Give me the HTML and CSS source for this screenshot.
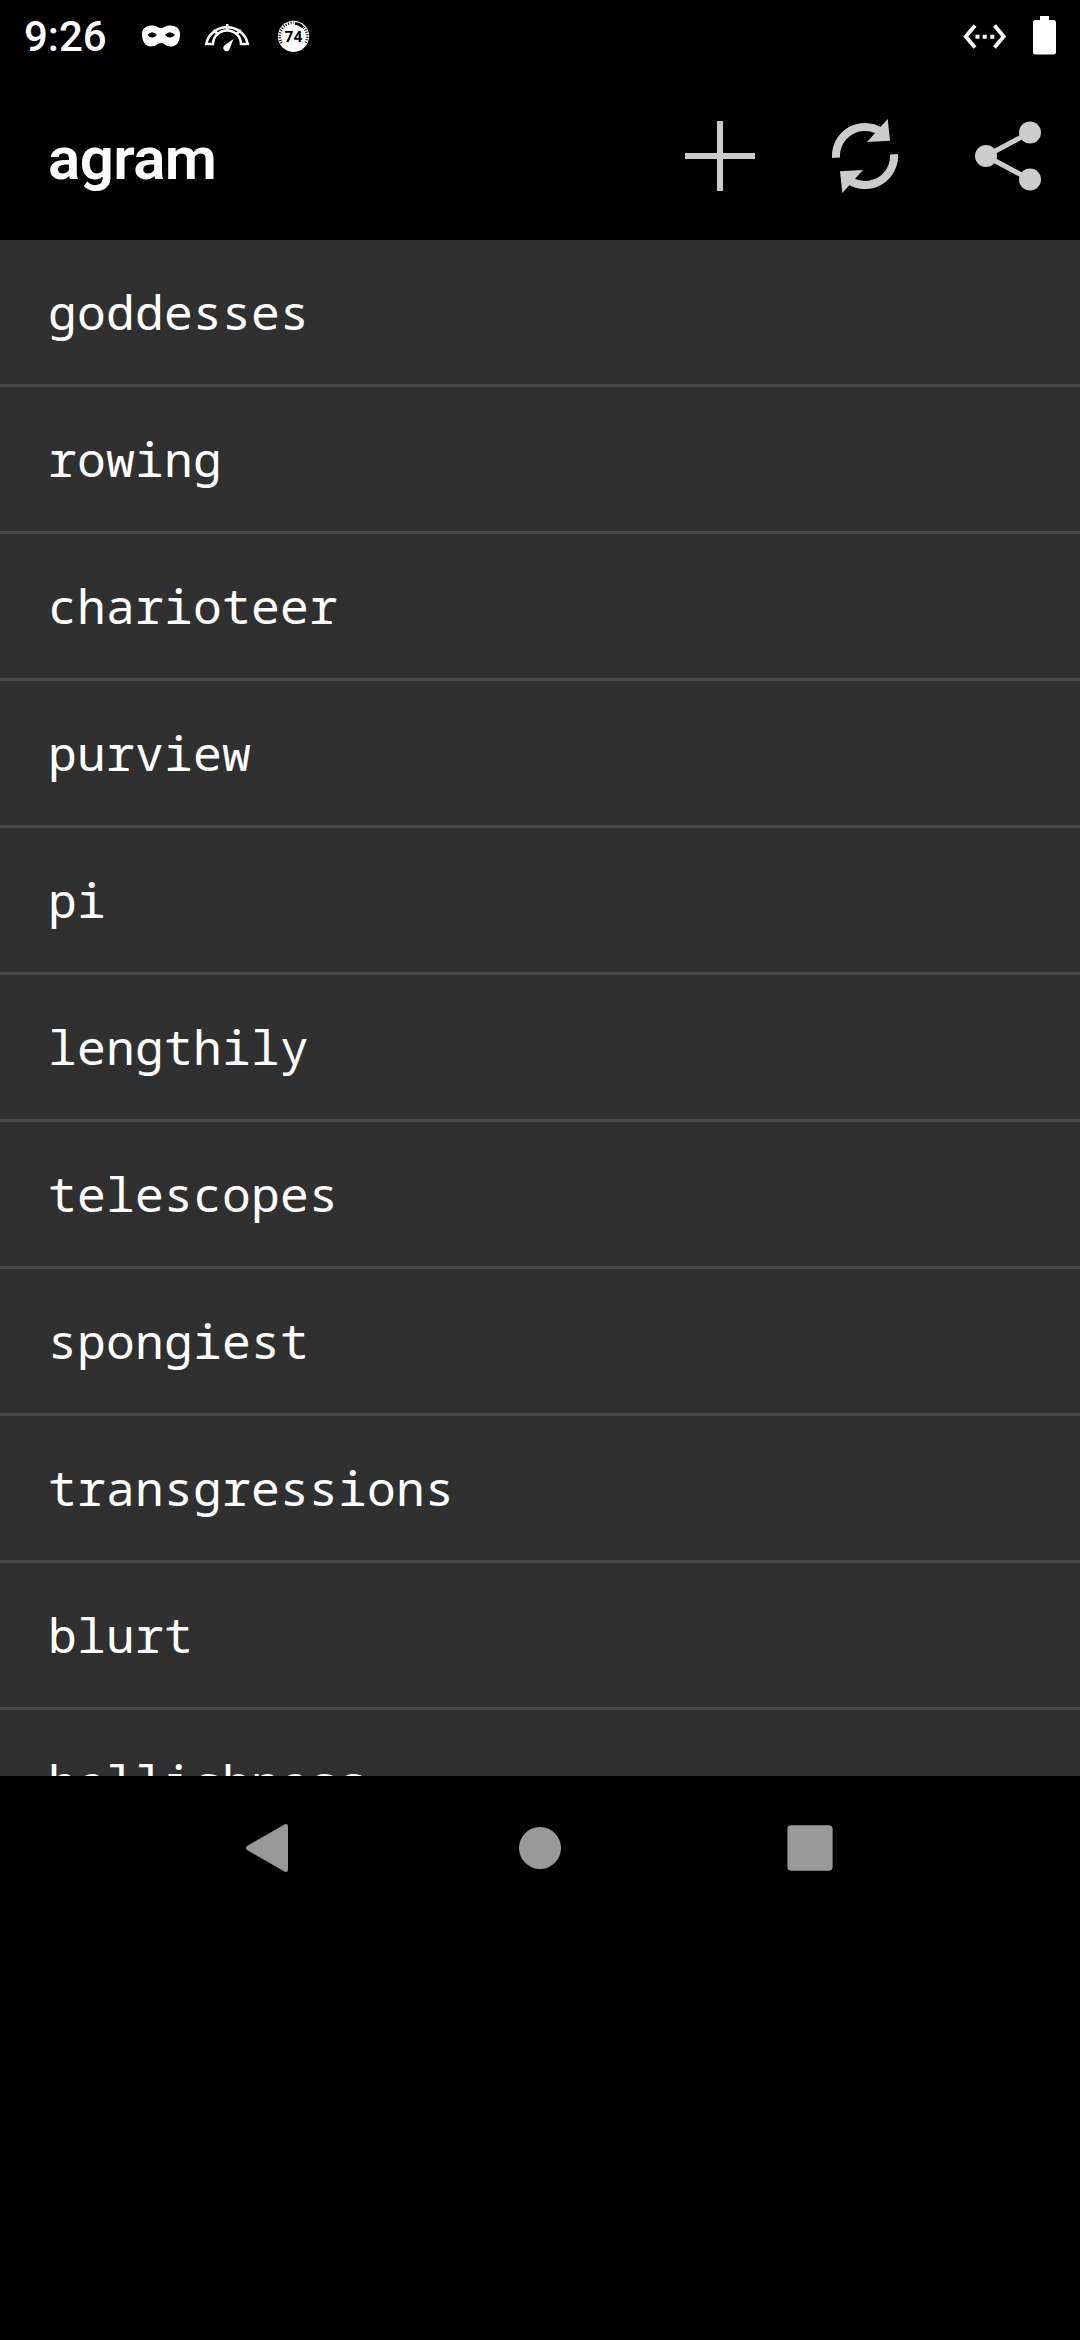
FILE: index.html
```html
<!DOCTYPE html>
<html lang="en">
<head>
<meta charset="utf-8">
<title>agram</title>
<link rel="stylesheet" href="styles.css">
</head>
<body>
<header class="status">
  <span class="clock">9:26</span>
  <svg class="notices" viewBox="135 0 185 72" width="185" height="72">
    <path fill="#fff" fill-rule="evenodd" d="M152 25.500C156 25 158 28 161 28S166 25 170 25.500C177 26 180 29 180 34C180 41 177 46.500 171 46.500C166 46.500 164 43 161 43S156 46.500 151 46.500C145 46.500 142 41 142 34C142 29 145 26 152 25.500ZM147.500 35Q152 29.500 157 35Q152 40 147.500 35ZM165 35Q170 29.500 175 35Q170 40 165 35Z"/>
    <g fill="none" stroke="#fff" stroke-width="2.500">
      <path d="M206.300 44A21 20 0 0 1 247.700 44H241A14 13.500 0 0 0 213 44Z"/>
      <path d="M213.500 30L218.500 35M227.300 24V31M240.800 30L235.500 35"/>
    </g>
    <path fill="#fff" d="M233.500 39L229.800 48.500A3.300 3.300 0 1 1 224.300 45.500Z"/>
    <circle cx="293.500" cy="36.300" r="15.600" fill="#fff"/>
    <path d="M281.600 43A13.600 13.600 0 0 1 293.500 22.700" fill="none" stroke="#000" stroke-width="2.600" stroke-dasharray="1 1.500"/>
    <path d="M303.800 27.500A13.600 13.600 0 0 1 305.400 43" fill="none" stroke="#000" stroke-width="2.600" stroke-dasharray="1 1.500"/>
    <path d="M295 23.400A13 13 0 0 1 303 27.300" fill="none" stroke="#000" stroke-width="2.600"/>
    <text x="293.500" y="41.600" text-anchor="middle" class="level">74</text>
  </svg>
  <svg class="system" viewBox="960 0 100 72" width="100" height="72">
    <path d="M975 25.500L965.800 36.500L975 47.500M994.500 25.500L1003.700 36.500L994.500 47.500" fill="none" stroke="#fff" stroke-width="3.800"/>
    <path d="M975.500 34.700h4v4h-4zM982.700 34.700h4v4h-4zM990.300 34.700h4v4h-4z" fill="#fff"/>
    <path d="M1040 16h9v4h4.500q2.500 0 2.500 2.500v29.500q0 2.500-2.500 2.500h-18q-2.500 0-2.500-2.500v-29.500q0-2.500 2.500-2.500h4.500z" fill="#fff"/>
  </svg>
</header>
<div class="toolbar">
  <h1>agram</h1>
  <nav class="actions">
    <svg viewBox="648 84 144 144"><path fill="#ccc" d="M717 121h6v32h32v6h-32v32h-6v-32h-32v-6h32z"/></svg>
    <svg viewBox="792 84 144 144">
      <g id="half"><path fill="none" stroke="#ccc" stroke-width="8" d="M836 157.800A29 29 0 0 1 880.500 131.500"/><path fill="#ccc" d="M887.700 119L890 140.700L867 142Z"/></g>
      <use href="#half" transform="rotate(180 865 156)"/>
    </svg>
    <svg viewBox="936 84 144 144">
      <path d="M1030 132.500L986 156L1030 179.500" fill="none" stroke="#ccc" stroke-width="5"/>
      <g fill="#ccc"><circle cx="1030" cy="132.500" r="11"/><circle cx="986" cy="156" r="11"/><circle cx="1030" cy="179.500" r="11"/></g>
    </svg>
  </nav>
</div>
<ul class="words">
  <li>goddesses</li>
  <li>rowing</li>
  <li>charioteer</li>
  <li>purview</li>
  <li>pi</li>
  <li>lengthily</li>
  <li>telescopes</li>
  <li>spongiest</li>
  <li>transgressions</li>
  <li>blurt</li>
  <li>hellishness</li>
</ul>
<footer class="navbar">
  <svg viewBox="-30 -30 60 60"><path d="M-23-2L14.500-23.600Q18-25 18-21V21Q18 25 14.500 23.600L-23 2Q-25 0-23-2Z"/></svg>
  <svg viewBox="-30 -30 60 60"><circle r="21"/></svg>
  <svg viewBox="-30 -30 60 60"><rect x="-22.600" y="-22.800" width="45.200" height="45.600" rx="4"/></svg>
</footer>
</body>
</html>
```
FILE: styles.css
```css
* { box-sizing: border-box; }
html { background: #000; }
body {
  margin: 0;
  width: 1080px;
  height: 2340px;
  background: #000;
  color: #fff;
  font-family: Roboto, sans-serif;
  overflow: hidden;
}
svg { display: block; flex: none; }
.status {
  display: flex;
  height: 72px;
  padding: 0 20px 0 24px;
}
.clock {
  width: 111px;
  padding-top: 1px;
  font-size: 42px;
  font-weight: 500;
  line-height: 72px;
}
.system { margin-left: auto; }
.level { font: 700 15.5px Roboto, sans-serif; fill: #000; }
.toolbar {
  display: flex;
  justify-content: space-between;
  height: 168px;
  padding-left: 48px;
}
h1 {
  margin: 0;
  padding-top: 3px;
  font-size: 60px;
  font-weight: 600;
  line-height: 168px;
  letter-spacing: -0.6px;
}
.actions { display: flex; }
.actions svg { width: 144px; height: 144px; margin-top: 12px; }
.words {
  height: 1536px;
  margin: 0;
  padding: 0;
  overflow: hidden;
  list-style: none;
  background: #303030;
}
.words li {
  height: 147px;
  padding-left: 48px;
  border-bottom: 3px solid #4a4a4a;
  font-family: "Droid Sans Mono", "Noto Sans Mono", "DejaVu Sans Mono", monospace;
  font-size: 48px;
  line-height: 144px;
  letter-spacing: 0.2px;
}
.navbar {
  display: flex;
  justify-content: center;
  gap: 210px;
  padding-top: 42px;
  fill: #999;
}
.navbar svg { width: 60px; height: 60px; }
```
